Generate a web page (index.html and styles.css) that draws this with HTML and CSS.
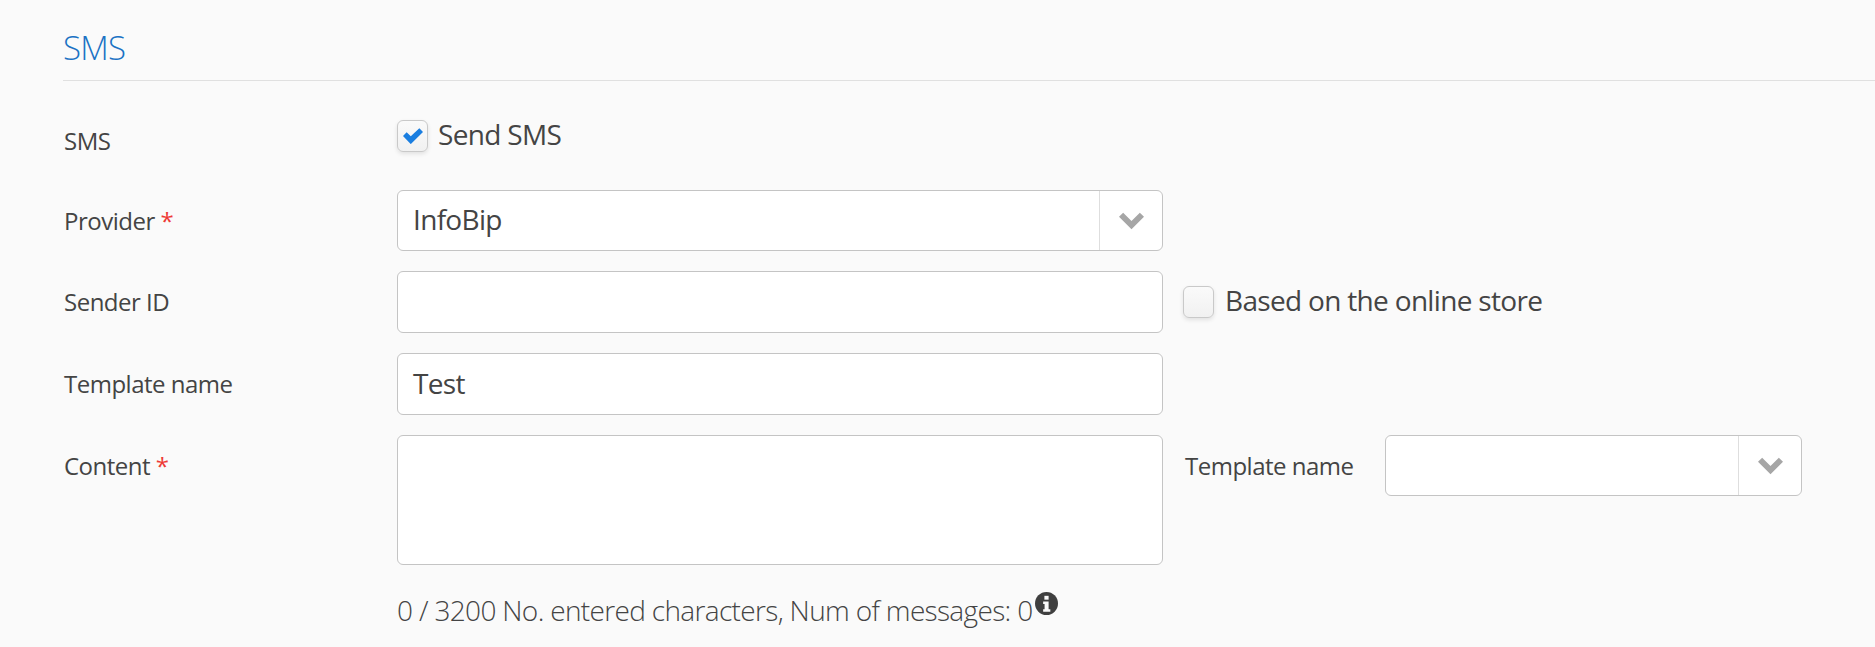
FILE: index.html
```html
<!DOCTYPE html>
<html lang="en">
<head>
<meta charset="utf-8">
<title>SMS</title>
<link rel="stylesheet" href="styles.css">
</head>
<body>
<main class="section">
  <h2 class="section-title">SMS</h2>
  <div class="form">
    <div class="row row-check">
      <div class="label label-check">SMS</div>
      <label class="check">
        <span class="box">
          <svg class="tick" viewBox="0 0 18 14" aria-hidden="true"><path d="M0 7 L3.300 3.700 L7 7.300 L14.700 0 L18 3.300 L7 14.300 Z"/></svg>
        </span>
        <span class="check-text">Send SMS</span>
      </label>
    </div>
    <div class="row">
      <div class="label">Provider <span class="req">*</span></div>
      <div class="select main-field">
        <span class="value">InfoBip</span>
        <span class="arrow"><svg class="chev" viewBox="0 0 24 16" aria-hidden="true"><path d="M0 4.500 L4 .5 L12 8.500 L20 .5 L24 4.500 L12 16.500 Z"/></svg></span>
      </div>
    </div>
    <div class="row">
      <div class="label">Sender ID</div>
      <div class="input main-field"></div>
      <label class="check side-check"><span class="box"></span><span class="check-text">Based on the online store</span></label>
    </div>
    <div class="row">
      <div class="label">Template name</div>
      <div class="input main-field">Test</div>
    </div>
    <div class="row row-top">
      <div class="label">Content <span class="req">*</span></div>
      <div class="textarea main-field"></div>
      <div class="side-label">Template name</div>
      <div class="select side-select">
        <span class="value"></span>
        <span class="arrow"><svg class="chev" viewBox="0 0 24 16" aria-hidden="true"><path d="M0 4.500 L4 .5 L12 8.500 L20 .5 L24 4.500 L12 16.500 Z"/></svg></span>
      </div>
    </div>
    <div class="counter">
      <span>0 / 3200 No. entered characters, Num of messages: 0</span>
      <svg class="info" viewBox="0 0 24 24" aria-hidden="true"><circle cx="12" cy="12" r="12" fill="#3f3f3f"/><rect x="9.800" y="4" width="4.400" height="4" fill="#fafafa"/><path d="M8.500 10h5.700v8h1.800v2.500H8.500V18h1.500v-5.500H8.500z" fill="#fafafa"/></svg>
    </div>
  </div>
</main>
</body>
</html>
```
FILE: styles.css
```css
* { box-sizing: border-box; }
html, body { margin: 0; height: 100%; }
body {
  background: #fafafa;
  color: #444;
  font-family: "Open Sans", sans-serif;
  overflow: hidden;
}
.section { padding: 28px 0 0 63px; }
.section-title {
  margin: 0;
  height: 53px;
  border-bottom: 1px solid #e0e0e0;
  color: #1b72c4;
  font-size: 33px;
  font-weight: 300;
  line-height: 39px;
  letter-spacing: -.8px;
}
.form { padding: 35px 0 0 1px; }
.row { display: flex; align-items: center; margin-bottom: 20px; }
.row-top { align-items: flex-start; margin-bottom: 0; }
.row-check { height: 52px; align-items: flex-start; margin-bottom: 22px; }
.label { width: 333px; flex: none; font-size: 24px; line-height: 30px; letter-spacing: -.5px; }
.row-top .label { padding-top: 16px; }
.label-check { padding-top: 10px; }
.req { color: #ee3a36; }
.check { display: flex; align-items: center; gap: 10px; font-size: 28px; line-height: 36px; letter-spacing: -.68px; }
.check-text { padding-bottom: 4px; }
.box {
  width: 31px;
  height: 32px;
  flex: none;
  display: flex;
  align-items: center;
  justify-content: center;
  border: 1px solid #c9c9c9;
  border-radius: 6px;
  background: linear-gradient(#fafafa, #f1f1f1);
  box-shadow: 0 2px 4px rgba(0, 0, 0, .1);
}
.tick { width: 20px; height: 16px; fill: #1a7ee0; }
.main-field { width: 766px; flex: none; }
.input, .select, .textarea {
  background: #fff;
  border: 1px solid #c4c4c4;
  border-radius: 6px;
  font-size: 28px;
  line-height: 36px;
  letter-spacing: -.68px;
}
.input { height: 62px; padding: 11px 15px; }
.select { height: 61px; display: flex; align-items: stretch; }
.textarea { height: 130px; }
.value { flex: 1; padding: 10px 15px; }
.arrow { width: 63px; flex: none; border-left: 1px solid #dedede; display: flex; align-items: center; justify-content: center; }
.chev { width: 25px; height: 17px; fill: #a6a6a6; overflow: visible; }
.side-check { margin-left: 20px; gap: 11px; }
.side-label { margin-left: 22px; width: 200px; flex: none; font-size: 24px; line-height: 30px; padding-top: 16px; letter-spacing: -.5px; }
.side-select { width: 417px; flex: none; }
.counter { display: flex; align-items: flex-start; padding: 27px 0 0 333px; font-size: 28px; font-weight: 300; line-height: 36px; letter-spacing: -.66px; }
.info { width: 23px; height: 23px; margin: 0 0 0 3px; flex: none; }
```
